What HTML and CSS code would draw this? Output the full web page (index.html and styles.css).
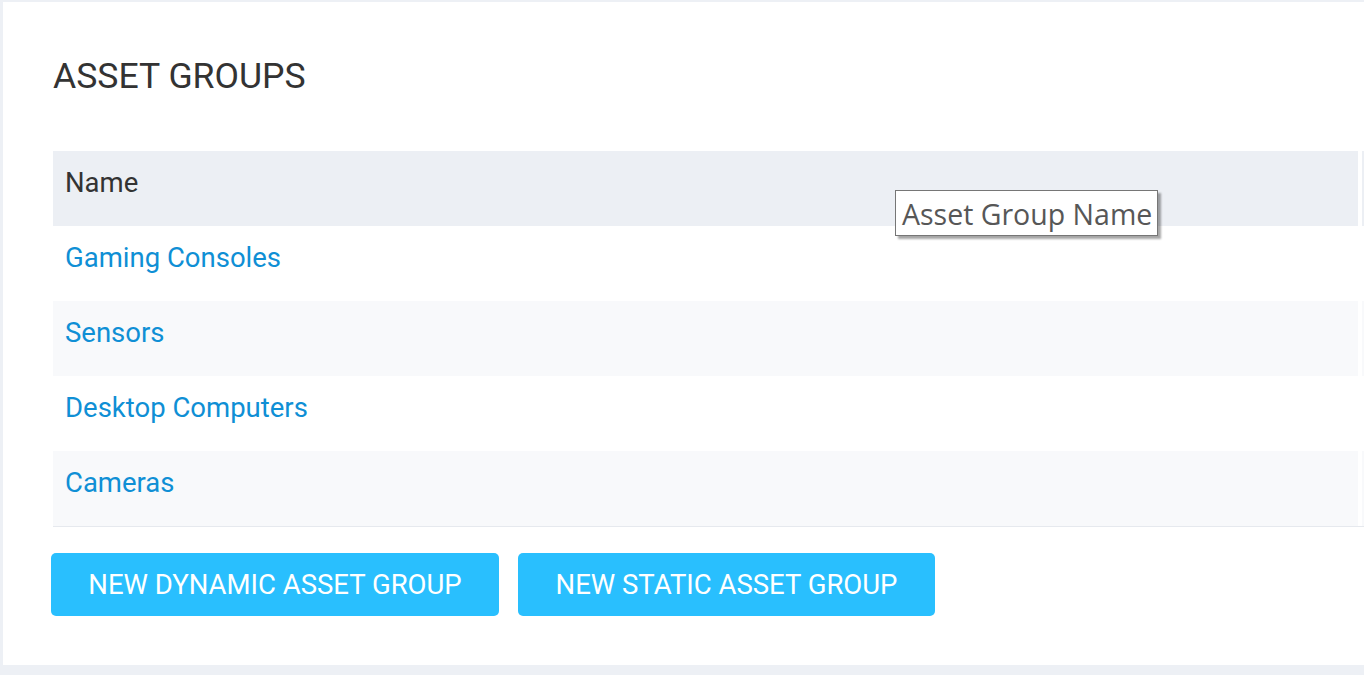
FILE: index.html
```html
<!DOCTYPE html>
<html lang="en">
<head>
<meta charset="utf-8">
<title>Asset Groups</title>
<link rel="stylesheet" href="styles.css">
</head>
<body>
<div class="panel">
  <h1 class="title">ASSET GROUPS</h1>
  <div class="table">
    <div class="row head">
      <div class="cell">Name</div>
      <div class="cell extra"></div>
    </div>
    <div class="row">
      <div class="cell"><a class="link" href="#">Gaming Consoles</a></div>
      <div class="cell extra"></div>
    </div>
    <div class="row odd">
      <div class="cell"><a class="link" href="#">Sensors</a></div>
      <div class="cell extra"></div>
    </div>
    <div class="row">
      <div class="cell"><a class="link" href="#">Desktop Computers</a></div>
      <div class="cell extra"></div>
    </div>
    <div class="row odd last">
      <div class="cell"><a class="link" href="#">Cameras</a></div>
      <div class="cell extra"></div>
    </div>
    <div class="tooltip">Asset Group Name</div>
  </div>
  <div class="actions">
    <button class="btn btn-dynamic">NEW DYNAMIC ASSET GROUP</button>
    <button class="btn btn-static">NEW STATIC ASSET GROUP</button>
  </div>
</div>
</body>
</html>
```
FILE: styles.css
```css
html, body {
  margin: 0;
  padding: 0;
}
body {
  background: #edf0f5;
  overflow: hidden;
  font-family: Roboto, "Liberation Sans", sans-serif;
  height: 675px;
}
.panel {
  background: #ffffff;
  margin: 2px 0 0 3px;
  width: 1500px;
  height: 663px;
  box-sizing: border-box;
  padding: 54px 0 0 50px;
}
.title {
  margin: 0;
  font-size: 35.6px;
  font-weight: 400;
  line-height: 41px;
  color: #333333;
}
.table {
  position: relative;
  margin-top: 54px;
  width: 1460px;
  border-bottom: 1px solid #e6e9ee;
}
.row {
  display: grid;
  grid-template-columns: 1305px 1fr;
  column-gap: 4px;
  height: 75px;
}
.cell {
  padding: 16px 12px 0 12px;
  font-size: 27.5px;
  line-height: 32px;
  color: #333333;
}
.head .cell {
  background: #eceff4;
}
.odd .cell {
  background: #f8f9fb;
}
.link {
  color: #0f8fd5;
  text-decoration: none;
}
.tooltip {
  position: absolute;
  left: 842px;
  top: 39px;
  width: 263px;
  height: 46px;
  box-sizing: border-box;
  border: 1px solid #767676;
  background: #ffffff;
  box-shadow: 3px 3px 2px rgba(0, 0, 0, 0.35);
  font-family: "Open Sans", "Noto Sans", sans-serif;
  font-size: 28.5px;
  line-height: 42px;
  padding: 2px 0 0 6px;
  color: #575757;
  white-space: nowrap;
}
.actions {
  display: flex;
  gap: 19px;
  margin: 26px 0 0 -2px;
}
.btn {
  height: 63px;
  border: none;
  border-radius: 5px;
  background: #29bffe;
  color: #ffffff;
  font-family: Roboto, "Liberation Sans", sans-serif;
  font-size: 27.5px;
  padding: 0 30px;
  cursor: pointer;
}
.btn-dynamic {
  width: 448px;
}
.btn-static {
  width: 417px;
}
```
